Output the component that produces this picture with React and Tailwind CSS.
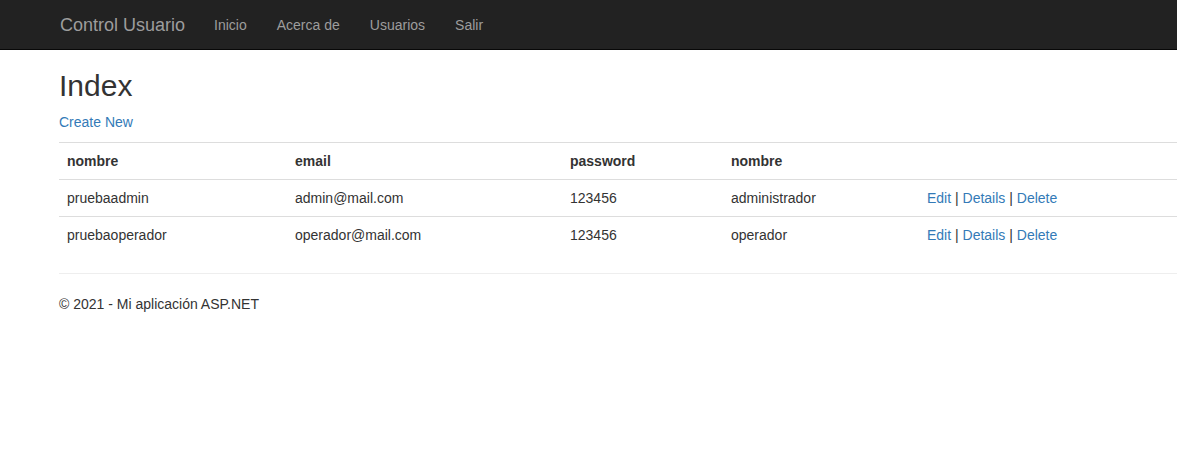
import React from 'react';

const users = [
  { nombre: 'pruebaadmin', email: 'admin@mail.com', password: '123456', rol: 'administrador' },
  { nombre: 'pruebaoperador', email: 'operador@mail.com', password: '123456', rol: 'operador' },
];

const navLinks = ['Inicio', 'Acerca de', 'Usuarios', 'Salir'];

function Actions() {
  return (
    <span>
      <a href="#" className="text-[#337ab7]">Edit</a> | <a href="#" className="text-[#337ab7]">Details</a> |{' '}
      <a href="#" className="text-[#337ab7]">Delete</a>
    </span>
  );
}

export default function App() {
  return (
    <div className="min-h-[450px] bg-white text-[14px] leading-[20px] text-[#333] font-['Liberation_Sans',Arial,sans-serif] overflow-hidden">
      {/* Navbar */}
      <nav className="h-[50px] bg-[#222] border-b border-[#080808] flex items-center pl-[45px]">
        <a href="#" className="px-[15px] text-[18px] leading-[20px] text-[#9d9d9d]">Control Usuario</a>
        <ul className="flex ml-[-1px]">
          {navLinks.map((link) => (
            <li key={link}>
              <a href="#" className="block px-[15px] py-[15px] text-[#9d9d9d]">{link}</a>
            </li>
          ))}
        </ul>
      </nav>

      {/* Body */}
      <div className="pl-[59px] w-[1260px]">
        <h2 className="mt-[19px] mb-[10px] text-[30px] leading-[33px] font-normal">Index</h2>
        <p className="mb-[10px]">
          <a href="#" className="text-[#337ab7]">Create New</a>
        </p>

        <table className="w-full border-collapse mb-[20px]">
          <tbody>
            <tr className="border-t border-[#ddd]">
              <th className="w-[228px] p-[8px] text-left font-bold">nombre</th>
              <th className="w-[275px] p-[8px] text-left font-bold">email</th>
              <th className="w-[161px] p-[8px] text-left font-bold">password</th>
              <th className="w-[196px] p-[8px] text-left font-bold">nombre</th>
              <th className="p-[8px]"></th>
            </tr>
            {users.map((u) => (
              <tr key={u.nombre} className="border-t border-[#ddd]">
                <td className="p-[8px]">{u.nombre}</td>
                <td className="p-[8px]">{u.email}</td>
                <td className="p-[8px]">{u.password}</td>
                <td className="p-[8px]">{u.rol}</td>
                <td className="p-[8px]"><Actions /></td>
              </tr>
            ))}
          </tbody>
        </table>

        <hr className="border-0 border-t border-[#eee] mb-[20px]" />
        <footer>
          <p>© 2021 - Mi aplicación ASP.NET</p>
        </footer>
      </div>
    </div>
  );
}
